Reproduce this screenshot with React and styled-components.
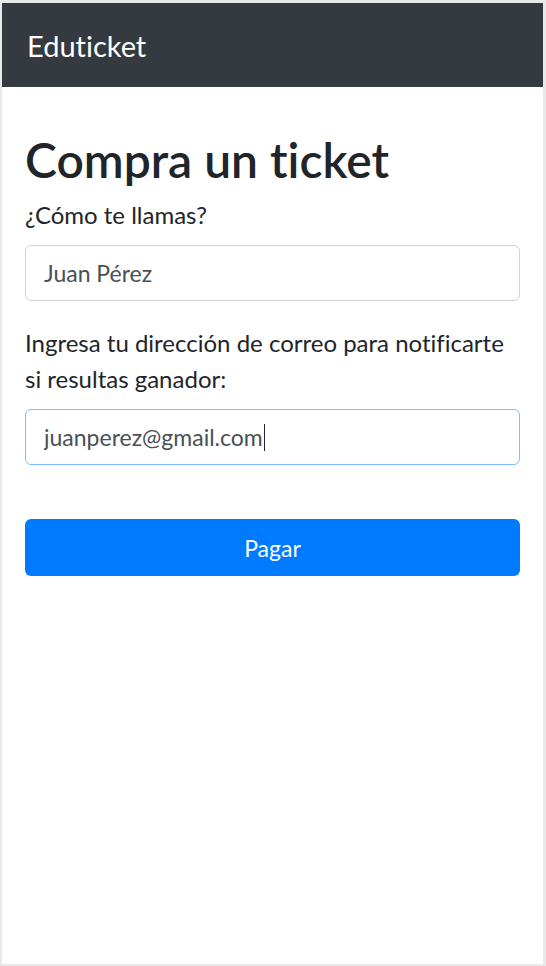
import React, { useLayoutEffect, useRef, useState } from "react";
import styled, { createGlobalStyle } from "styled-components";

const GlobalStyle = createGlobalStyle`
  html, body {
    margin: 0;
    padding: 0;
    background: #e9e9e9;
  }
  * {
    box-sizing: border-box;
  }
`;

const FONT = `"Lato", "Open Sans", sans-serif`;

const Frame = styled.div`
  margin: 3px 3px 2px 2px;
  height: 961px;
  background: #fff;
  font-family: ${FONT};
  font-variant-ligatures: none;
  color: #212529;
`;

const Navbar = styled.nav`
  height: 84px;
  background: #343a40;
  display: flex;
  align-items: center;
  padding: 0 25px;
`;

const Brand = styled.span`
  color: #fff;
  font-size: 29px;
  line-height: 45px;
`;

const Container = styled.main`
  padding: 44px 23px 0 23px;
`;

const Title = styled.h1`
  margin: 0 0 8px;
  font-size: 48px;
  font-weight: 600;
  line-height: 58px;
`;

const FormGroup = styled.div`
  margin-bottom: 24px;
`;

const Label = styled.label`
  display: block;
  font-size: 24px;
  line-height: 36px;
  margin-bottom: 12px;
`;

const FieldWrap = styled.div`
  position: relative;
`;

const Field = styled.input`
  display: block;
  width: 100%;
  height: 56px;
  padding: 9px 18px;
  font-family: inherit;
  font-variant-ligatures: none;
  font-size: 23px;
  color: #495057;
  background: #fff;
  border: 1.5px solid ${(p) => (p.$focused ? "#80bdff" : "#ced4da")};
  border-radius: 6px;
  outline: none;
`;

const Caret = styled.span`
  position: absolute;
  top: 15px;
  width: 1px;
  height: 27px;
  background: #212529;
  pointer-events: none;
`;

const SubmitButton = styled.button`
  display: block;
  width: 100%;
  height: 57px;
  margin-top: 54px;
  border: none;
  border-radius: 6px;
  background: #007bff;
  color: #fff;
  font-family: inherit;
  font-size: 23px;
  cursor: pointer;
`;

const EMAIL = "juanperez@gmail.com";

export default function App() {
  const emailRef = useRef(null);
  const [caretLeft, setCaretLeft] = useState(null);

  // place the fake caret at the end of the email text
  useLayoutEffect(() => {
    const el = emailRef.current;
    if (!el) return;
    const ctx = document.createElement("canvas").getContext("2d");
    const cs = getComputedStyle(el);
    ctx.font = `${cs.fontWeight} ${cs.fontSize} ${cs.fontFamily}`;
    const w = ctx.measureText(el.value).width;
    setCaretLeft(19.5 + w + 1);
  }, []);

  return (
    <>
      <GlobalStyle />
      <Frame>
        <Navbar>
          <Brand>Eduticket</Brand>
        </Navbar>
        <Container>
          <Title>Compra un ticket</Title>
          <FormGroup>
            <Label htmlFor="name">¿Cómo te llamas?</Label>
            <Field id="name" type="text" defaultValue="Juan Pérez" />
          </FormGroup>
          <div>
            <Label htmlFor="email">
              Ingresa tu dirección de correo para notificarte si resultas ganador:
            </Label>
            <FieldWrap>
              <Field
                id="email"
                ref={emailRef}
                type="email"
                $focused
                defaultValue={EMAIL}
              />
              {caretLeft !== null && <Caret style={{ left: caretLeft }} />}
            </FieldWrap>
          </div>
          <SubmitButton type="button">Pagar</SubmitButton>
        </Container>
      </Frame>
    </>
  );
}
